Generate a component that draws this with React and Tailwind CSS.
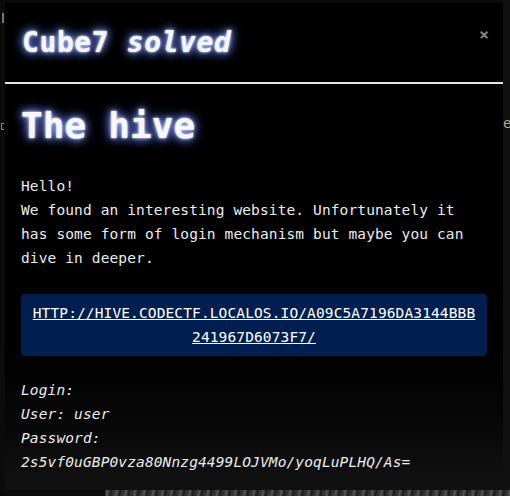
import React from 'react';

const mono = "font-['DejaVu_Sans_Mono','Liberation_Mono',monospace]";
const glow = '[text-shadow:0_0_3px_#fff,0_0_8px_#8fa8ff,0_0_14px_#4d6bff]';

const App = () => {
  return (
    <div className={`relative w-[510px] h-[496px] overflow-hidden bg-[#0b0b0b] ${mono}`}>
      {/* page behind the modal */}
      <div className="flex h-full">
        <div className="w-[5px] flex flex-col">
          <span className="mt-[13px] ml-[2px] w-[2px] h-[10px] bg-[#777]" />
          <span className="mt-[100px] ml-[1px] w-[3px] h-[7px] border-l border-y border-[#888]" />
        </div>
        <div className="flex-1" />
        <div className="w-[7px] flex flex-col bg-[#101010]">
          <span className="mt-[114px] text-[14px] leading-[18px] text-[#b8a58a]">e</span>
        </div>
      </div>
      <div className="absolute left-[105px] right-0 bottom-0 h-[6px] bg-[repeating-linear-gradient(100deg,#2a2a2a_0px,#555_3px,#1a1a1a_6px,#3a3a3a_9px)]" />

      {/* modal */}
      <div className="absolute left-[5px] top-[3px] w-[498px] h-[487px] rounded-t-[4px] bg-gradient-to-b from-black via-black to-[#121212] flex flex-col">
        <div className="flex items-start justify-between h-[81px] border-b-2 border-[#e6e6e6] bg-black">
          <h1 className={`mt-[22px] ml-[17px] text-[28px] leading-[36px] tracking-[0.6px] font-bold text-[#f4f6ff] ${glow}`}>
            Cube7 <span className="italic">solved</span>
          </h1>
          <button className="mt-[24px] mr-[14px] text-[16px] leading-[16px] font-bold text-[#8a8a8a]">×</button>
        </div>

        <div className="px-[16px] pt-[18px] text-[14.5px] leading-[24px] tracking-[0.12px] text-[#ececec]">
          <h2 className={`text-[36px] leading-[48px] font-bold text-[#f6f7ff] ${glow}`}>The hive</h2>
          <p className="mt-[24px]">
            Hello!<br />
            We found an interesting website. Unfortunately it has some form of login mechanism but maybe you can dive in deeper.
          </p>
          <div className="mt-[24px] rounded-[4px] bg-[#001e4f] px-[11px] py-[7px] text-center">
            <a href="#" className="underline break-all text-white">
              HTTP://HIVE.CODECTF.LOCALOS.IO/A09C5A7196DA3144BBB241967D6073F7/
            </a>
          </div>
          <p className="mt-[22px] italic">
            Login:<br />
            User: user<br />
            Password:<br />
            2s5vf0uGBP0vza80Nnzg4499LOJVMo/yoqLuPLHQ/As=
          </p>
        </div>
      </div>
    </div>
  );
};

export default App;
